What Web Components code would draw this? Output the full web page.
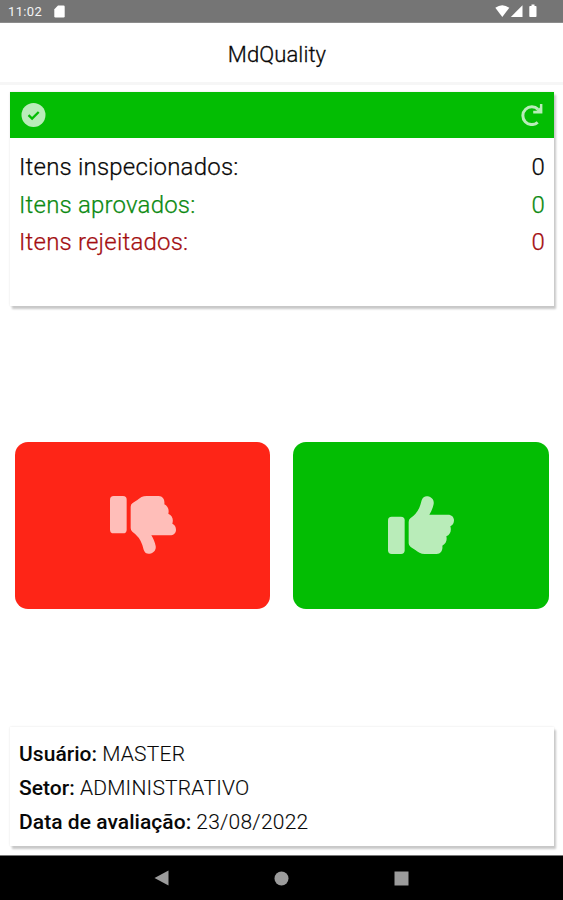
<!DOCTYPE html>
<html lang="pt-BR">
<head>
<meta charset="utf-8">
<title>MdQuality</title>
<style>
  body {
    margin: 0;
    background: #fff;
    color: #080808;
    font-family: Roboto, 'Liberation Sans', sans-serif;
  }
</style>
</head>
<body>
<md-app>
  <status-bar slot="top">11:02</status-bar>
  <app-header slot="top">MdQuality</app-header>
  <inspection-card>
    <count-row label="Itens inspecionados:" value="0"></count-row>
    <count-row label="Itens aprovados:" value="0" style="color: #0c8a12"></count-row>
    <count-row label="Itens rejeitados:" value="0" style="color: #a30d10"></count-row>
  </inspection-card>
  <vote-buttons>
    <vote-button kind="down"></vote-button>
    <vote-button kind="up"></vote-button>
  </vote-buttons>
  <session-card>
    <info-line label="Usuário:">MASTER</info-line>
    <info-line label="Setor:">ADMINISTRATIVO</info-line>
    <info-line label="Data de avaliação:">23/08/2022</info-line>
  </session-card>
  <nav-bar slot="bottom"></nav-bar>
</md-app>

<script>
class MdApp extends HTMLElement {
  connectedCallback() {
    this.attachShadow({ mode: 'open' });
    this.shadowRoot.innerHTML = `
      <style>
        :host {
          display: flex;
          flex-direction: column;
          height: 900px;
          overflow: hidden;
        }
        main {
          flex: 1;
          display: flex;
          flex-direction: column;
          justify-content: space-between;
          padding: 7px 9px 9px 9.500px;
        }
      </style>
      <slot name="top"></slot>
      <main><slot></slot></main>
      <slot name="bottom"></slot>
    `;
  }
}

class StatusBar extends HTMLElement {
  connectedCallback() {
    this.attachShadow({ mode: 'open' });
    this.shadowRoot.innerHTML = `
      <style>
        :host {
          display: flex;
          align-items: center;
          box-sizing: border-box;
          height: 23px;
          padding: 1px 25px 0 8px;
          background: #757575;
          border-bottom: 1px solid #8c8c8c;
          color: #f4f4f4;
          font-size: 13px;
          letter-spacing: 0.35px;
        }
        svg { display: block; fill: #fff; }
        .card { margin-left: 11.500px; }
        .system { margin-left: auto; margin-top: -1px; }
      </style>
      <slot></slot>
      <svg class="card" width="11" height="13" viewBox="0 0 11 13">
        <path d="M4 .5h5.500a1.200 1.200 0 0 1 1.200 1.200v9.600a1.200 1.200 0 0 1-1.200 1.200h-8A1.200 1.200 0 0 1 .3 11.300V4.200z"/>
      </svg>
      <svg class="system" width="43" height="14" viewBox="0 0 43 14">
        <path d="M.3 3.700Q7.200-1.300 14.300 3.700L7.300 12.900z"/>
        <path d="M27.500 1.300V13H15.800z"/>
        <path d="M36.500.600h3v1.300h1.200a.8.8 0 0 1 .8.8v9.500a.8.8 0 0 1-.8.8h-5.600a.8.8 0 0 1-.8-.8V2.700a.8.8 0 0 1 .8-.8h1.400z"/>
      </svg>
    `;
  }
}

class AppHeader extends HTMLElement {
  connectedCallback() {
    this.attachShadow({ mode: 'open' });
    this.shadowRoot.innerHTML = `
      <style>
        :host {
          display: flex;
          align-items: center;
          justify-content: center;
          box-sizing: border-box;
          height: 62px;
          padding: 3px 9px 0 0;
          border-bottom: 3px solid #f6f6f6;
          font-size: 22px;
          font-weight: 300;
          letter-spacing: 0.1px;
          -webkit-text-stroke: 0.3px;
        }
      </style>
      <slot></slot>
    `;
  }
}

class InspectionCard extends HTMLElement {
  connectedCallback() {
    this.attachShadow({ mode: 'open' });
    this.shadowRoot.innerHTML = `
      <style>
        :host {
          display: block;
          height: 214px;
          box-shadow: 2px 3px 2px #c8c8c8, 0 0 2px #e4e4e4;
          background: #fff;
        }
        header {
          display: flex;
          align-items: center;
          justify-content: space-between;
          box-sizing: border-box;
          height: 46px;
          padding: 0 11px;
          background: #03bd03;
        }
        svg { display: block; }
        .rows { padding: 11px 9px 0 9.500px; }
      </style>
      <header>
        <svg width="25" height="25" viewBox="0 0 25 25">
          <circle cx="12.500" cy="12" r="12" fill="#b9ecb9"/>
          <path d="M7.500 12.100l3.600 3.500 6.600-6.600" fill="none" stroke="#03bd03" stroke-width="2.300"/>
        </svg>
        <svg width="22" height="22" viewBox="0 0 22 22">
          <path d="M17.100 5.400A8.900 8.900 0 1 0 16.700 18.300" fill="none" stroke="#b9ecb9" stroke-width="3"/>
          <path d="M21.400 0v9.400h-9.200v-2.600h3.400L18.900 3.600V0z" fill="#b9ecb9"/>
        </svg>
      </header>
      <div class="rows"><slot></slot></div>
    `;
  }
}

class CountRow extends HTMLElement {
  connectedCallback() {
    this.attachShadow({ mode: 'open' });
    this.shadowRoot.innerHTML = `
      <style>
        :host {
          display: flex;
          justify-content: space-between;
          font-size: 24px;
          line-height: 37.500px;
          letter-spacing: 0.2px;
          font-weight: 300;
          -webkit-text-stroke: 0.25px;
        }
      </style>
      <span>${this.getAttribute('label')}</span>
      <span>${this.getAttribute('value')}</span>
    `;
  }
}

class VoteButtons extends HTMLElement {
  connectedCallback() {
    this.attachShadow({ mode: 'open' });
    this.shadowRoot.innerHTML = `
      <style>
        :host {
          display: grid;
          grid-template-columns: 1fr 1fr;
          gap: 23px;
          margin: 17px 5px 0;
        }
      </style>
      <slot></slot>
    `;
  }
}

class VoteButton extends HTMLElement {
  connectedCallback() {
    this.attachShadow({ mode: 'open' });
    this.shadowRoot.innerHTML = `
      <style>
        :host {
          display: flex;
          align-items: center;
          justify-content: center;
          height: 167px;
          border-radius: 13px;
          background: #03bd03;
          color: #b9ecb9;
        }
        :host([kind="down"]) {
          background: #fe2517;
          color: #ffbeb9;
        }
        :host([kind="down"]) svg {
          margin-left: 1px;
          transform: scaleY(-1);
        }
        svg { display: block; fill: currentColor; }
      </style>
      <svg width="66" height="58" viewBox="0 0 198 174">
        <rect x="0" y="62" width="50" height="112" rx="11"/>
        <path d="M62 78Q62 71 67 67Q89 52 97 27L101 13C104 3 111 0 119 1C131 3 139 12 137 24C135 35 130 46 124 56H180C191 56 198 63 198 73C198 82 194 88 187 91C191 104 187 116 175 121C178 133 174 143 163 149C165 162 159 174 146 174H110C98 174 90 169 82 162L68 153Q62 149 62 142Z"/>
      </svg>
    `;
  }
}

class SessionCard extends HTMLElement {
  connectedCallback() {
    this.attachShadow({ mode: 'open' });
    this.shadowRoot.innerHTML = `
      <style>
        :host {
          display: block;
          box-sizing: border-box;
          height: 119px;
          padding: 9.500px 9px 0 9.500px;
          background: #fff;
          box-shadow: 2px 3px 2px #c8c8c8, 0 0 2px #e4e4e4;
        }
      </style>
      <slot></slot>
    `;
  }
}

class InfoLine extends HTMLElement {
  connectedCallback() {
    this.attachShadow({ mode: 'open' });
    this.shadowRoot.innerHTML = `
      <style>
        :host {
          display: flex;
          gap: 5px;
          font-size: 21px;
          line-height: 34px;
          font-weight: 300;
          white-space: nowrap;
        }
        b {
          font-weight: 500;
          letter-spacing: 0.05px;
        }
        span {
          letter-spacing: 0.22px;
          -webkit-text-stroke: 0.1px;
        }
      </style>
      <b>${this.getAttribute('label')}</b><span><slot></slot></span>
    `;
  }
}

class NavBar extends HTMLElement {
  connectedCallback() {
    this.attachShadow({ mode: 'open' });
    this.shadowRoot.innerHTML = `
      <style>
        :host {
          display: flex;
          align-items: center;
          justify-content: center;
          gap: 105px;
          box-sizing: border-box;
          height: 45px;
          border-top: 1px solid #777;
          background: #000;
        }
        svg { display: block; fill: #9b9b9b; }
      </style>
      <svg width="15" height="16" viewBox="0 0 15 16"><path d="M.5 8L14.500.5v15z"/></svg>
      <svg width="15" height="15" viewBox="0 0 15 15"><circle cx="7.500" cy="7.500" r="7"/></svg>
      <svg width="15" height="15" viewBox="0 0 15 15"><path d="M.5.500h14v14H.5z"/></svg>
    `;
  }
}

customElements.define('md-app', MdApp);
customElements.define('status-bar', StatusBar);
customElements.define('app-header', AppHeader);
customElements.define('inspection-card', InspectionCard);
customElements.define('count-row', CountRow);
customElements.define('vote-buttons', VoteButtons);
customElements.define('vote-button', VoteButton);
customElements.define('session-card', SessionCard);
customElements.define('info-line', InfoLine);
customElements.define('nav-bar', NavBar);
</script>
</body>
</html>
